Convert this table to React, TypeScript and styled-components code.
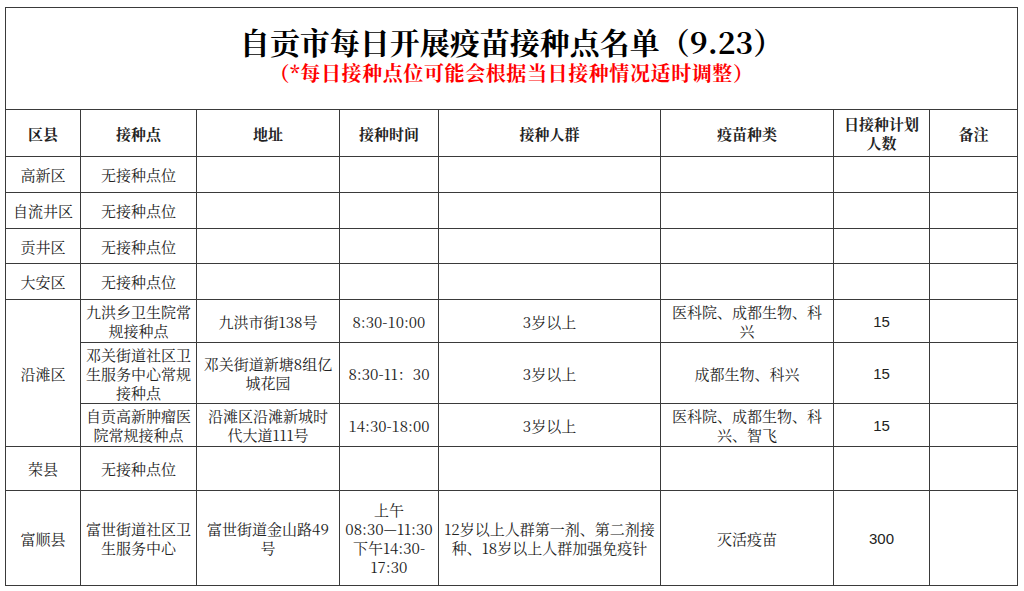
import { createGlobalStyle } from 'styled-components';
import styled from 'styled-components';

const GlobalStyle = createGlobalStyle`
  body {
    margin: 0;
    background: #ffffff;
    font-family: "Noto Serif CJK SC", "Noto Sans CJK SC", "Liberation Serif", serif;
  }
`;

const Page = styled.div`
  padding: 7px 0 0 5px;
`;

const Table = styled.table`
  width: 1012px;
  border-collapse: collapse;
  table-layout: fixed;
  color: #222;
  font-size: 15px;
`;

const Row = styled.tr<{ $h: number }>`
  height: ${(p) => p.$h}px;
`;

const Cell = styled.td<{ $bold?: boolean; $num?: boolean }>`
  border: 1px solid #3a3a3a;
  padding: 0 4px;
  text-align: center;
  vertical-align: middle;
  line-height: 19px;
  font-weight: ${(p) => (p.$bold ? 700 : 400)};
  font-family: ${(p) =>
    p.$num ? '"Liberation Sans", "Noto Sans CJK SC", sans-serif' : 'inherit'};
  word-break: break-all;
`;

const TitleCell = styled.td`
  border: 1px solid #3a3a3a;
  text-align: center;
  vertical-align: middle;
  padding: 0 0 8px;
`;

const Title = styled.div`
  font-size: 30px;
  line-height: 34px;
  font-weight: 700;
  color: #000;
`;

const Subtitle = styled.div`
  margin-top: 3px;
  font-size: 20px;
  line-height: 24px;
  font-weight: 700;
  letter-spacing: 0.6px;
  color: #ff0000;
`;

const widths = [75, 116, 143, 99, 222, 173, 96, 88];

type Site = {
  name: string;
  addr?: string;
  time?: React.ReactNode;
  crowd?: string;
  vaccine?: string;
  plan?: string;
  h: number;
};

const empty = (county: string, h: number) => ({ county, sites: [{ name: '无接种点位', h }] });

const data: { county: string; sites: Site[] }[] = [
  empty('高新区', 36),
  empty('自流井区', 36),
  empty('贡井区', 35),
  empty('大安区', 36),
  {
    county: '沿滩区',
    sites: [
      {
        name: '九洪乡卫生院常规接种点',
        addr: '九洪市街138号',
        time: '8:30-10:00',
        crowd: '3岁以上',
        vaccine: '医科院、成都生物、科兴',
        plan: '15',
        h: 43,
      },
      {
        name: '邓关街道社区卫生服务中心常规接种点',
        addr: '邓关街道新塘8组亿城花园',
        time: '8:30-11：30',
        crowd: '3岁以上',
        vaccine: '成都生物、科兴',
        plan: '15',
        h: 61,
      },
      {
        name: '自贡高新肿瘤医院常规接种点',
        addr: '沿滩区沿滩新城时代大道111号',
        time: '14:30-18:00',
        crowd: '3岁以上',
        vaccine: '医科院、成都生物、科兴、智飞',
        plan: '15',
        h: 43,
      },
    ],
  },
  empty('荣县', 44),
  {
    county: '富顺县',
    sites: [
      {
        name: '富世街道社区卫生服务中心',
        addr: '富世街道金山路49号',
        time: (
          <>
            上午
            <br />
            08:30—11:30
            <br />
            下午14:30-
            <br />
            17:30
          </>
        ),
        crowd: '12岁以上人群第一剂、第二剂接种、18岁以上人群加强免疫针',
        vaccine: '灭活疫苗',
        plan: '300',
        h: 95,
      },
    ],
  },
];

export default function App() {
  return (
    <Page>
      <GlobalStyle />
      <Table>
        <colgroup>
          {widths.map((w, i) => (
            <col key={i} style={{ width: w }} />
          ))}
        </colgroup>
        <tbody>
          <Row $h={102}>
            <TitleCell colSpan={8}>
              <Title>自贡市每日开展疫苗接种点名单（9.23）</Title>
              <Subtitle>（*每日接种点位可能会根据当日接种情况适时调整）</Subtitle>
            </TitleCell>
          </Row>
          <Row $h={47}>
            <Cell $bold>区县</Cell>
            <Cell $bold>接种点</Cell>
            <Cell $bold>地址</Cell>
            <Cell $bold>接种时间</Cell>
            <Cell $bold>接种人群</Cell>
            <Cell $bold>疫苗种类</Cell>
            <Cell $bold>
              日接种计划
              <br />
              人数
            </Cell>
            <Cell $bold>备注</Cell>
          </Row>
          {data.map((c) =>
            c.sites.map((s, i) => (
              <Row $h={s.h} key={c.county + i}>
                {i === 0 && <Cell rowSpan={c.sites.length}>{c.county}</Cell>}
                <Cell>{s.name}</Cell>
                <Cell>{s.addr}</Cell>
                <Cell>{s.time}</Cell>
                <Cell>{s.crowd}</Cell>
                <Cell>{s.vaccine}</Cell>
                <Cell $num>{s.plan}</Cell>
                <Cell />
              </Row>
            ))
          )}
        </tbody>
      </Table>
    </Page>
  );
}
